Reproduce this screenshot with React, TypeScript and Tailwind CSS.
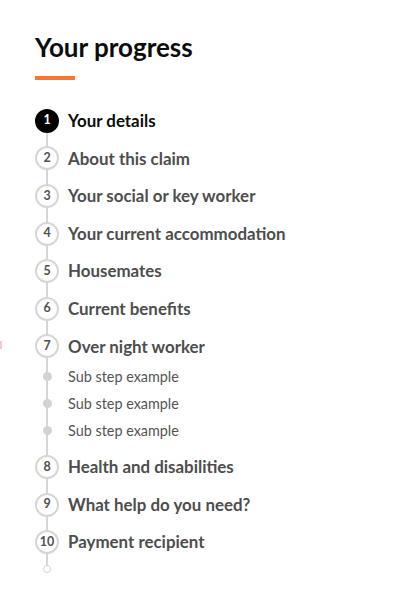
import React from "react";

const steps = [
  "Your details",
  "About this claim",
  "Your social or key worker",
  "Your current accommodation",
  "Housemates",
  "Current benefits",
  "Over night worker",
];

const laterSteps = ["Health and disabilities", "What help do you need?", "Payment recipient"];

const subSteps = ["Sub step example", "Sub step example", "Sub step example"];

function StepRow({ index, label, current }: { index: number; label: string; current?: boolean }) {
  return (
    <li className="flex h-[37.6px] items-center gap-[9px]">
      <span
        className={
          current
            ? "relative z-10 flex h-6 w-6 items-center justify-center rounded-full border-2 border-black bg-black text-[12.5px] font-bold text-white"
            : "relative z-10 flex h-6 w-6 items-center justify-center rounded-full border-2 border-[#d6d6d6] bg-white text-[12.5px] font-bold text-[#505050]"
        }
      >
        {index}
      </span>
      <span
        className={
          current
            ? "text-[16.9px] font-bold text-[#0b0c0c]"
            : "text-[16.9px] font-bold text-[#4d4d4d]"
        }
      >
        {label}
      </span>
    </li>
  );
}

function SubStepRow({ label }: { label: string }) {
  return (
    <li className="flex h-[27px] items-center gap-[9px]">
      <span className="relative z-10 flex w-6 justify-center">
        <span className="h-[9px] w-[9px] rounded-full bg-[#d3d3d3]" />
      </span>
      <span className="text-[14.4px] text-[#555555]">{label}</span>
    </li>
  );
}

export default function App() {
  return (
    <div
      className="relative min-h-[606px] w-[415px] bg-white pl-[35px] pt-[31px]"
      style={{ fontFamily: "Lato, 'Noto Sans', sans-serif" }}
    >
      <span className="absolute left-0 top-[341px] h-[8px] w-[2px] bg-[#f7c6d4]" />
      <h2 className="text-[26px] font-bold leading-[33px] text-[#0b0c0c]">Your progress</h2>
      <div className="mt-[12px] h-[4px] w-[40px] bg-[#f47738]" />

      <div className="relative mt-[22px]">
        <div className="absolute left-[11px] top-[19px] h-[448px] w-[2px] bg-[#d6d6d6]" />
        <ol>
          {steps.map((s, i) => (
            <StepRow key={s} index={i + 1} label={s} current={i === 0} />
          ))}
          <li className="-mt-[2px]" />
          {subSteps.map((s, i) => (
            <SubStepRow key={i} label={s} />
          ))}
          <li className="h-[4px]" />
          {laterSteps.map((s, i) => (
            <StepRow key={s} index={i + 8} label={s} />
          ))}
          <li className="flex h-[17px] items-center">
            <span className="relative z-10 flex w-6 justify-center">
              <span className="h-[8px] w-[8px] rounded-full border-[1.5px] border-[#d0d0d0] bg-white" />
            </span>
          </li>
        </ol>
      </div>
    </div>
  );
}
